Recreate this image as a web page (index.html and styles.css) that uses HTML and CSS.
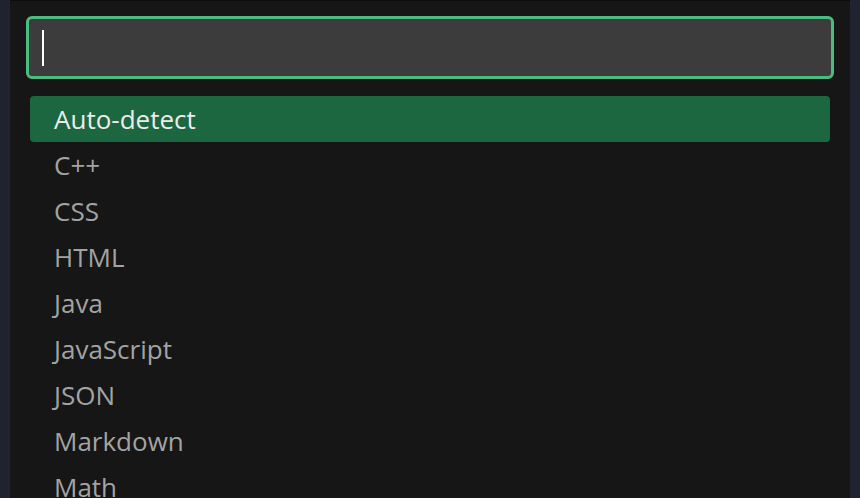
FILE: index.html
```html
<!DOCTYPE html>
<html>
<head>
<meta charset="utf-8">
<link rel="stylesheet" href="styles.css">
</head>
<body>
<div class="page">
  <div class="side"></div>
  <div class="panel">
    <div class="search"><span class="caret"></span></div>
    <ul class="list">
      <li class="item active">Auto-detect</li>
      <li class="item">C++</li>
      <li class="item">CSS</li>
      <li class="item">HTML</li>
      <li class="item">Java</li>
      <li class="item">JavaScript</li>
      <li class="item">JSON</li>
      <li class="item">Markdown</li>
      <li class="item">Math</li>
    </ul>
  </div>
  <div class="side"></div>
</div>
</body>
</html>
```
FILE: styles.css
```css
html, body {
  margin: 0;
  padding: 0;
  height: 100%;
  overflow: hidden;
  background: #1f2330;
}
.page {
  display: flex;
  height: 498px;
}
.side {
  width: 10px;
  flex: none;
  background: #1f2330;
}
.panel {
  flex: 1;
  background: #161616;
  border-top: 1px solid #0c0c0c;
  padding: 15px 16px 0 16px;
  font-family: "Open Sans", "Noto Sans", sans-serif;
  overflow: hidden;
}
.search {
  height: 57px;
  border: 3px solid #4cbb7f;
  border-radius: 6px;
  background: #3c3c3c;
  display: flex;
  align-items: center;
  padding-left: 13px;
}
.caret {
  width: 2px;
  height: 36px;
  background: #ffffff;
}
.list {
  list-style: none;
  margin: 17px 4px 0 4px;
  padding: 0;
}
.item {
  height: 46px;
  line-height: 46px;
  padding-left: 24px;
  font-size: 26px;
  color: #a3a3a3;
  border-radius: 4px;
  white-space: nowrap;
}
.item.active {
  background: #1c6640;
  color: #ececec;
}
```
